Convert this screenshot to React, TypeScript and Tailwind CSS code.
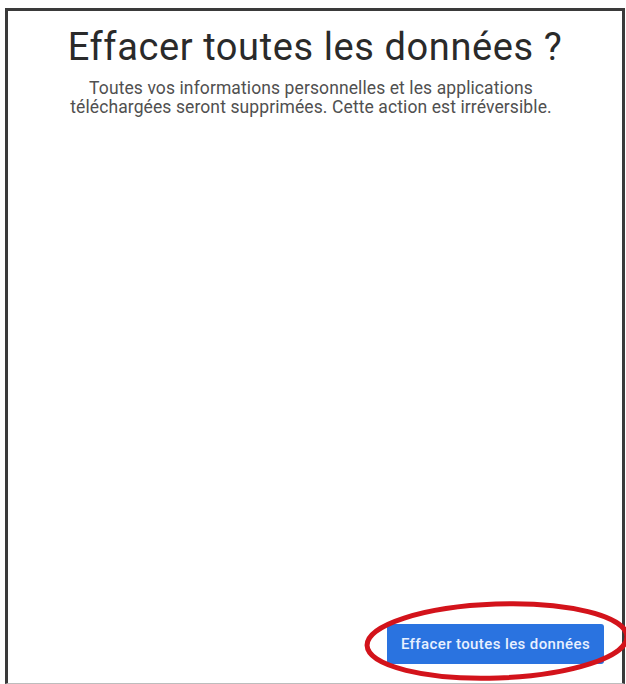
export default function App() {
  return (
    <div className="relative w-[626px] h-[684px] bg-white overflow-hidden">
      {/* Scanned frame */}
      <div className="absolute left-[5px] top-[8px] w-[620px] h-[676px] border-l-[3px] border-t-[3px] border-r-[3px] border-b border-[#3a3a3a] border-b-[#bdbdbd] flex flex-col">
        <h1 className="mt-[14px] text-center text-[38px] leading-[44px] tracking-[0.6px] text-[#2a2a2a] font-['Roboto',sans-serif] font-normal">
          Effacer toutes les données ?
        </h1>
        <p className="mt-[10px] pr-[8px] text-center text-[17.5px] leading-[19px] text-[#505050] font-['Roboto',sans-serif] tracking-[0.1px]">
          Toutes vos informations personnelles et les applications
          <br />
          téléchargées seront supprimées. Cette action est irréversible.
        </p>

        <div className="mt-auto flex justify-end pr-[18px] pb-[19px]">
          <button className="h-[40px] w-[217px] rounded-[3px] bg-[#2a73e0] text-[15px] tracking-[0.4px] font-medium text-[#e8f0ff] font-['Roboto',sans-serif]">
            Effacer toutes les données
          </button>
        </div>
      </div>

      {/* Red highlight ellipse drawn over the button */}
      <svg
        className="absolute left-[361px] top-[596px]"
        width="276"
        height="90"
        viewBox="0 0 276 90"
      >
        <ellipse
          cx="136"
          cy="45"
          rx="130"
          ry="37"
          fill="none"
          stroke="#d3131b"
          strokeWidth="5"
          transform="rotate(-2 136 45)"
        />
      </svg>
    </div>
  );
}
